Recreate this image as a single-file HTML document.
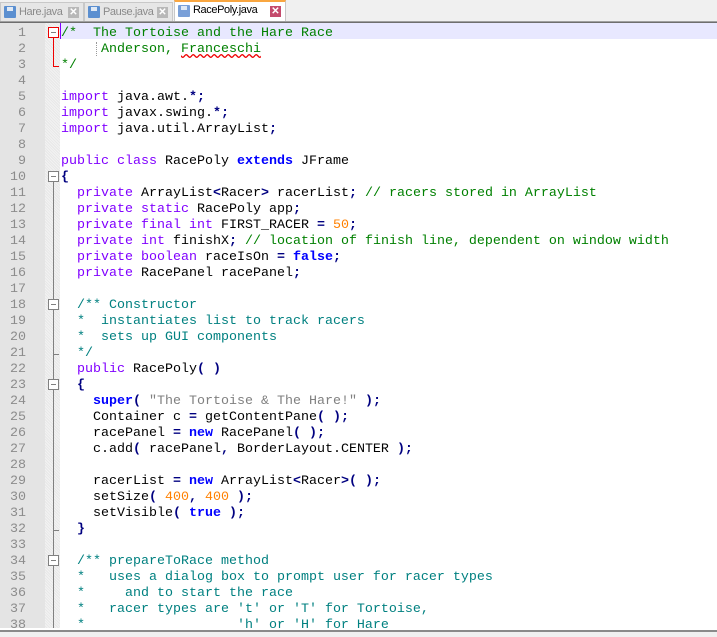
<!DOCTYPE html><html><head><style>
body{margin:0;width:717px;height:635px;overflow:hidden;background:#fff;position:relative;font-family:"Liberation Mono",monospace;}
#tabs{position:absolute;left:0;top:0;width:717px;height:21px;background:#f0f0f0;}
#tabline{position:absolute;left:0;top:21px;width:717px;height:2px;background:#6e6e6e;border-top:1px solid #a0a0a0;box-sizing:border-box}
.tab{position:absolute;top:2px;height:19px;font:11px "Liberation Sans",sans-serif;color:#8a8a8a;background:#e6e6e6;border:1px solid #c8c8c8;border-bottom:none;box-sizing:border-box;line-height:18px;padding-left:18px;letter-spacing:-0.4px}
.tab.a{top:0;height:21px;background:#fff;color:#000;border-top:2px solid #f9a640;line-height:17px}
.ico{position:absolute;left:3px;top:3px;width:12px;height:12px;background:#5b8fd0;border-radius:1px}
.ico:after{content:"";position:absolute;left:3px;top:1px;width:6px;height:4px;background:#dfe9f5}
.x{position:absolute;right:4px;top:4px;width:11px;height:11px;background:#b8b8b8;color:#fff;font:bold 10px/11px "Liberation Sans";text-align:center;letter-spacing:0}
.a .x{background:#c44a6c}
#ln{position:absolute;left:0;top:23px;width:45px;height:605px;background:#e4e4e4}
#fm{position:absolute;left:45px;top:23px;width:15px;height:605px;background:repeating-linear-gradient(45deg,#f2f2f2 0 1px,#e8e8e8 1px 2px)}
#bot{position:absolute;left:0;top:630px;width:717px;height:5px;background:#f0f0f0;border-top:2px solid #8a8a8a}
.r{position:absolute;left:0;height:16px;width:717px;font-size:13.33px;line-height:16px;white-space:pre}
.n{position:absolute;left:0;top:2px;width:26px;text-align:right;color:#8c8c8c}
.t{position:absolute;left:61px;top:2px}
.k{color:#8000ff}.b{color:#0000ff;font-weight:bold}.c{color:#008000}.d{color:#008080}.s{color:#808080}.num{color:#ff8000}.o{color:#000080;font-weight:bold}
.fb{position:absolute;left:48px;width:9px;height:9px;border:1px solid #808080;background:#fff;box-sizing:content-box}
.fb:after{content:"";position:absolute;left:2px;top:4px;width:5px;height:1px;background:#808080}
.fl{position:absolute;left:53px;width:1px;background:#808080}
.ft{position:absolute;left:53px;width:6px;height:1px;background:#808080}
</style></head><body>
<div id="tabs">
<div class="tab" style="left:0;width:84px"><span class="ico"></span>Hare.java<span class="x">✕</span></div>
<div class="tab" style="left:84px;width:89px"><span class="ico"></span>Pause.java<span class="x">✕</span></div>
<div class="tab a" style="left:174px;width:112px"><span class="ico" style="background:#7aa0d8"></span>RacePoly.java<span class="x">✕</span></div>
</div>
<div id="tabline"></div>
<div id="ln"></div><div id="fm"></div>
<div style="position:absolute;left:60px;top:23px;width:657px;height:16px;background:#e8e8ff"></div>
<div style="position:absolute;left:60px;top:23px;width:1px;height:16px;background:#8000ff"></div>
<div style="position:absolute;left:96px;top:42px;width:1px;height:14px;border-left:1px dotted #999"></div>

<div class="fb" style="top:27px;border-color:#e00"></div><div class="fl" style="top:38px;height:28px;background:#e00"></div><div class="ft" style="top:66px;background:#e00"></div>
<div class="fb" style="top:171px"></div><div class="fl" style="top:182px;height:446px"></div>
<div class="fb" style="top:299px"></div><div class="ft" style="top:354px"></div>
<div class="fb" style="top:379px"></div><div class="ft" style="top:530px"></div>
<div class="fb" style="top:555px"></div>

<div class="r" style="top:24px"><span class="n">1</span><span class="t c">/*  The Tortoise and the Hare Race</span></div>
<div class="r" style="top:40px"><span class="n">2</span><span class="t c">     Anderson, <span style="text-decoration:underline wavy #e00">Franceschi</span></span></div>
<div class="r" style="top:56px"><span class="n">3</span><span class="t c">*/</span></div>
<div class="r" style="top:72px"><span class="n">4</span></div>
<div class="r" style="top:88px"><span class="n">5</span><span class="t"><span class="k">import</span> java.awt.<span class="o">*;</span></span></div>
<div class="r" style="top:104px"><span class="n">6</span><span class="t"><span class="k">import</span> javax.swing.<span class="o">*;</span></span></div>
<div class="r" style="top:120px"><span class="n">7</span><span class="t"><span class="k">import</span> java.util.ArrayList<span class="o">;</span></span></div>
<div class="r" style="top:136px"><span class="n">8</span></div>
<div class="r" style="top:152px"><span class="n">9</span><span class="t"><span class="k">public class</span> RacePoly <span class="b">extends</span> JFrame</span></div>
<div class="r" style="top:168px"><span class="n">10</span><span class="t o">{</span></div>
<div class="r" style="top:184px"><span class="n">11</span><span class="t">  <span class="k">private</span> ArrayList<span class="o">&lt;</span>Racer<span class="o">&gt;</span> racerList<span class="o">;</span> <span class="c">// racers stored in ArrayList</span></span></div>
<div class="r" style="top:200px"><span class="n">12</span><span class="t">  <span class="k">private static</span> RacePoly app<span class="o">;</span></span></div>
<div class="r" style="top:216px"><span class="n">13</span><span class="t">  <span class="k">private final int</span> FIRST_RACER <span class="o">=</span> <span class="num">50</span><span class="o">;</span></span></div>
<div class="r" style="top:232px"><span class="n">14</span><span class="t">  <span class="k">private int</span> finishX<span class="o">;</span> <span class="c">// location of finish line, dependent on window width</span></span></div>
<div class="r" style="top:248px"><span class="n">15</span><span class="t">  <span class="k">private boolean</span> raceIsOn <span class="o">=</span> <span class="b">false</span><span class="o">;</span></span></div>
<div class="r" style="top:264px"><span class="n">16</span><span class="t">  <span class="k">private</span> RacePanel racePanel<span class="o">;</span></span></div>
<div class="r" style="top:280px"><span class="n">17</span></div>
<div class="r" style="top:296px"><span class="n">18</span><span class="t d">  /** Constructor</span></div>
<div class="r" style="top:312px"><span class="n">19</span><span class="t d">  *  instantiates list to track racers</span></div>
<div class="r" style="top:328px"><span class="n">20</span><span class="t d">  *  sets up GUI components</span></div>
<div class="r" style="top:344px"><span class="n">21</span><span class="t d">  */</span></div>
<div class="r" style="top:360px"><span class="n">22</span><span class="t">  <span class="k">public</span> RacePoly<span class="o">( )</span></span></div>
<div class="r" style="top:376px"><span class="n">23</span><span class="t o">  {</span></div>
<div class="r" style="top:392px"><span class="n">24</span><span class="t">    <span class="b">super</span><span class="o">(</span> <span class="s">"The Tortoise &amp; The Hare!"</span> <span class="o">);</span></span></div>
<div class="r" style="top:408px"><span class="n">25</span><span class="t">    Container c <span class="o">=</span> getContentPane<span class="o">( );</span></span></div>
<div class="r" style="top:424px"><span class="n">26</span><span class="t">    racePanel <span class="o">=</span> <span class="b">new</span> RacePanel<span class="o">( );</span></span></div>
<div class="r" style="top:440px"><span class="n">27</span><span class="t">    c.add<span class="o">(</span> racePanel<span class="o">,</span> BorderLayout.CENTER <span class="o">);</span></span></div>
<div class="r" style="top:456px"><span class="n">28</span></div>
<div class="r" style="top:472px"><span class="n">29</span><span class="t">    racerList <span class="o">=</span> <span class="b">new</span> ArrayList<span class="o">&lt;</span>Racer<span class="o">&gt;( );</span></span></div>
<div class="r" style="top:488px"><span class="n">30</span><span class="t">    setSize<span class="o">(</span> <span class="num">400</span><span class="o">,</span> <span class="num">400</span> <span class="o">);</span></span></div>
<div class="r" style="top:504px"><span class="n">31</span><span class="t">    setVisible<span class="o">(</span> <span class="b">true</span> <span class="o">);</span></span></div>
<div class="r" style="top:520px"><span class="n">32</span><span class="t o">  }</span></div>
<div class="r" style="top:536px"><span class="n">33</span></div>
<div class="r" style="top:552px"><span class="n">34</span><span class="t d">  /** prepareToRace method</span></div>
<div class="r" style="top:568px"><span class="n">35</span><span class="t d">  *   uses a dialog box to prompt user for racer types</span></div>
<div class="r" style="top:584px"><span class="n">36</span><span class="t d">  *     and to start the race</span></div>
<div class="r" style="top:600px"><span class="n">37</span><span class="t d">  *   racer types are 't' or 'T' for Tortoise,</span></div>
<div class="r" style="top:616px"><span class="n">38</span><span class="t d">  *                   'h' or 'H' for Hare</span></div>
<div id="bot"></div>
</body></html>
